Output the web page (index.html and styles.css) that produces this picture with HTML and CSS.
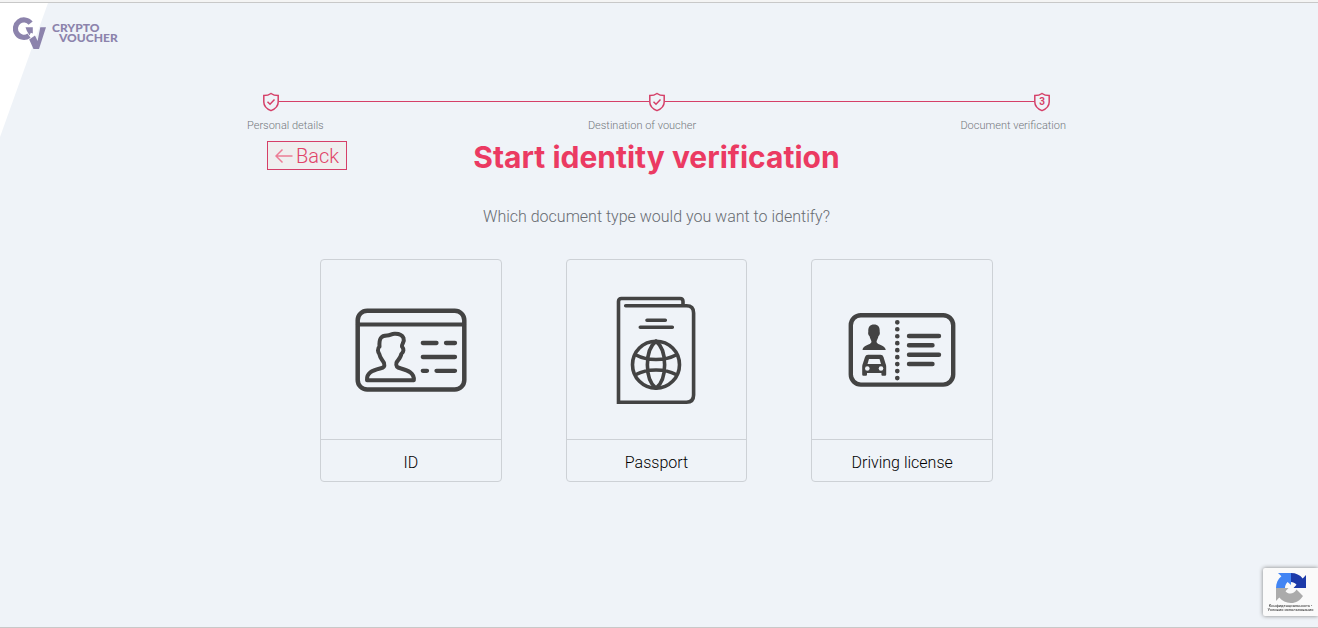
FILE: index.html
```html
<!DOCTYPE html>
<html lang="en">
<head>
<meta charset="utf-8">
<meta name="viewport" content="width=device-width, initial-scale=1">
<title>Start identity verification</title>
<link rel="stylesheet" href="styles.css">
</head>
<body>
<div class="page">
  <header class="header">
    <a class="logo" href="#" aria-label="Crypto Voucher">
      <svg class="logo-mark" width="34" height="33" viewBox="0 0 34 33" aria-hidden="true">
        <path d="M17.600 7.200A8.500 8.700 0 1 0 16 19.600" fill="none" stroke="#8c83ac" stroke-width="5.200"/>
        <path d="M12.500 11.300H19.800V17.500L17.800 16.700L16.500 19.500L13.800 14.800Z" fill="#8c83ac"/>
        <path d="M16.200 23.500L22 19.500L24.600 25L27.300 11.300H33L26 33H20.500Z" fill="#8c83ac"/>
      </svg>
      <span class="logo-text"><span>CRYPTO</span><span class="logo-second">VOUCHER</span></span>
    </a>
  </header>

  <main class="main">
    <section class="stepper" aria-label="Progress">
      <div class="track">
        <svg class="shield" width="18" height="20" viewBox="0 0 18 20" aria-hidden="true"><path d="M9 1.500C7 3 4.500 3.600 1.800 3.600V10C1.800 14 5 17 9 18.600C13 17 16.200 14 16.200 10V3.600C13.500 3.600 11 3 9 1.500Z"/><path d="M5.500 9.800L8 12.200L12.500 7.500"/></svg>
        <span class="line"></span>
        <svg class="shield" width="18" height="20" viewBox="0 0 18 20" aria-hidden="true"><path d="M9 1.500C7 3 4.500 3.600 1.800 3.600V10C1.800 14 5 17 9 18.600C13 17 16.200 14 16.200 10V3.600C13.500 3.600 11 3 9 1.500Z"/><path d="M5.500 9.800L8 12.200L12.500 7.500"/></svg>
        <span class="line"></span>
        <svg class="shield" width="18" height="20" viewBox="0 0 18 20" aria-hidden="true"><path d="M9 1.500C7 3 4.500 3.600 1.800 3.600V10C1.800 14 5 17 9 18.600C13 17 16.200 14 16.200 10V3.600C13.500 3.600 11 3 9 1.500Z"/><text class="shield-number" x="9" y="13" text-anchor="middle">3</text></svg>
      </div>
      <ol class="steps">
        <li>Personal details</li>
        <li>Destination of voucher</li>
        <li>Document verification</li>
      </ol>
    </section>

    <div class="title-row">
      <button class="back" type="button">
        <svg width="18" height="16" viewBox="0 0 18 16" aria-hidden="true"><path d="M17.500 8H1M7.500 1.500L1 8L7.500 14.500" fill="none" stroke="#ec7d95" stroke-width="1.500"/></svg>
        Back
      </button>
      <h1 class="title">Start identity verification</h1>
    </div>

    <p class="question">Which document type would you want to identify?</p>

    <div class="cards">
      <button class="card" type="button">
        <span class="picture">
          <svg width="112" height="84" viewBox="0 0 112 84" fill="none" stroke="#434343" stroke-width="4.500" stroke-linecap="round" stroke-linejoin="round" aria-hidden="true">
            <rect x="2.700" y="2.700" width="106.600" height="78.800" rx="9.500"/>
            <path d="M3 16.500H109" stroke-width="4"/>
            <path stroke-width="4" d="M12 72.200H58.800C59.500 65 53 62.500 46 60.500C42 59.500 40.500 58.500 41.500 54.500C43.500 51.500 46 49 46.300 46C49 44 49 41 47 38.500C46.500 36 50 34 48.500 30C47 26.500 43.500 25.500 39.500 25.700C36 25.800 35.500 27.500 32 27.500C26 27.500 24 30.500 24.500 38.500C22 40.500 23 44.500 24.300 46C25 50 27.500 52 29 55C30 58.500 29 59.500 25 60.500C17 62.500 11.500 65 12 72.200Z"/>
            <path stroke-width="4.300" d="M67.800 35H81.500M91 35H100M67.800 49H100M67.800 62.800H72M81.500 62.800H100"/>
          </svg>
        </span>
        <span class="name">ID</span>
      </button>
      <button class="card" type="button">
        <span class="picture">
          <svg width="80" height="108" viewBox="0 0 80 108" fill="none" stroke="#434343" stroke-width="3.600" stroke-linecap="round" stroke-linejoin="round" aria-hidden="true">
            <path stroke-linejoin="miter" d="M9.700 9.800H70.500Q77.600 9.800 77.600 17V99Q77.600 106.200 70.500 106.200H2.500V5.500Q2.500 2.500 5.500 2.500H64Q67 2.500 67 5.500V9.500"/>
            <path d="M31 24.200H49.300M24.300 31.300H56.300"/>
            <circle cx="40" cy="68.700" r="23.500"/>
            <path d="M40 45.200C28.500 54 28.500 83.400 40 92.200C51.500 83.400 51.500 54 40 45.200M20 59C31 65 49 65 60 59M20 78.500C31 72.500 49 72.500 60 78.500"/>
          </svg>
        </span>
        <span class="name">Passport</span>
      </button>
      <button class="card" type="button">
        <span class="picture">
          <svg width="108" height="76" viewBox="0 0 108 76" fill="none" stroke="#434343" stroke-width="4.400" stroke-linecap="round" aria-hidden="true">
            <rect x="2.800" y="3.200" width="102.400" height="69.400" rx="10"/>
            <path d="M49.300 10.300V66.500" stroke-width="4.700" stroke-dasharray="0 6.970"/>
            <path d="M61 24H91M61 33.300H84.500M61 42.700H91M61 52H84.500"/>
            <path fill="#434343" stroke="none" d="M26 12.500C22 12.500 20 15 20.300 19.500C19.700 22 20.700 23.500 21.500 24C22 26.500 23.300 28 23.500 30C22.500 33.500 15 32.500 14.500 38H37.800C37 32.500 29.500 33.500 28.500 30C28.700 28 30 26.500 30.500 24C31.300 23.500 32.300 22 31.700 19.500C32 15 30 12.500 26 12.500Z"/>
            <path fill="#434343" stroke="none" d="M20 42.800H32.500Q34.800 42.800 35.500 45L37.500 51.500Q38.200 53 38.200 54.500V62.500Q38.200 63.800 37 63.800H34.500Q33.400 63.800 33.400 62.500V61H19V62.500Q19 63.800 17.900 63.800H15.400Q14.200 63.800 14.200 62.500V54.500Q14.200 53 14.900 51.500L17 45Q17.700 42.800 20 42.800Z"/>
            <g fill="#eff3f8" stroke="none">
              <path d="M21 47H31.500L33 52H19.500Z"/>
              <circle cx="19.300" cy="56.500" r="2.300"/>
              <circle cx="33" cy="56.500" r="2.300"/>
            </g>
          </svg>
        </span>
        <span class="name">Driving license</span>
      </button>
    </div>
  </main>

  <aside class="captcha" aria-label="reCAPTCHA">
    <svg width="32" height="32" viewBox="0 0 32 32" aria-hidden="true">
      <path fill="#1c3aa9" d="M16 1C21 1 25 3 27.700 6.400L31 3V16H18.500L21.500 12.800C20 11 18 10 16 10Z"/>
      <path fill="#4285f4" d="M16 1V13L12.600 10C11 11.500 10 13.500 10 16H1C1 11 3 7 6.400 4.300L3 1Z"/>
      <path fill="#ababab" d="M1 16H13.500L10.500 19.200C13 22.500 19 22.500 21.500 17.500L28 24C25 28.500 21 31 16 31C11 31 7 29 4.300 25.600L1 29Z"/>
    </svg>
    <span class="captcha-links"><a href="#">Конфиденциальность</a> -<br><a href="#">Условия использования</a></span>
  </aside>
</div>
</body>
</html>
```

FILE: styles.css
```css
* {
  box-sizing: border-box;
}

body {
  margin: 0;
  font-family: Roboto, "Liberation Sans", sans-serif;
  font-weight: 300;
  background: #f4f4f4;
}

button {
  font: inherit;
  cursor: pointer;
}

.page {
  min-height: calc(100vh - 2px);
  margin-top: 2px;
  border-top: 1px solid #c8c8c8;
  border-bottom: 1px solid #c8c8c8;
  background: #eff3f8;
  position: relative;
}

.page::before {
  content: "";
  position: absolute;
  top: 0;
  left: 0;
  width: 48px;
  height: 134px;
  background: #fff;
  clip-path: polygon(0 0, 100% 0, 0 100%);
}

.header {
  position: relative;
  display: flex;
  padding: 13px 13px 0;
}

.logo {
  display: flex;
  gap: 5px;
  color: #8c83ac;
  text-decoration: none;
}

.logo-text {
  display: flex;
  flex-direction: column;
  padding-top: 7px;
  font: 900 12px/10px Lato, sans-serif;
}

.logo-second {
  padding-left: 7px;
}

.main {
  display: flex;
  flex-direction: column;
  align-items: center;
  padding: 43px 5px 32px 0;
}

.stepper {
  width: 100%;
  max-width: 819px;
}

.track {
  display: flex;
  align-items: flex-start;
  padding: 0 15px;
}

.line {
  flex: 1;
  height: 1px;
  margin: 9px -1px 0;
  background: #d53f68;
}

.shield {
  fill: none;
  stroke: #d53f68;
  stroke-width: 1.5;
}

.shield-number {
  font: 700 10px Roboto, sans-serif;
  fill: #d53f68;
  stroke: none;
}

.steps {
  display: flex;
  justify-content: space-between;
  margin: 0;
  padding: 7px 0 0;
  list-style: none;
  font-size: 11px;
  line-height: 14px;
  color: #74787e;
}

.title-row {
  display: grid;
  grid-template-columns: 1fr auto 1fr;
  align-items: start;
  width: 100%;
  max-width: 779px;
  padding-top: 8px;
}

.back {
  justify-self: start;
  display: flex;
  align-items: center;
  gap: 3px;
  height: 29px;
  padding: 0 7px;
  border: 1px solid #d53f68;
  background: #efefef;
  color: #e04468;
  font-size: 20px;
}

.title {
  margin: 0;
  font: 700 30px/32px Inter, sans-serif;
  color: #eb3a62;
}

.question {
  margin: 32px 0 0;
  font-size: 16px;
  line-height: 24px;
  color: #686c72;
}

.cards {
  display: grid;
  grid-template-columns: repeat(3, 1fr);
  gap: 64px;
  width: 100%;
  max-width: 673px;
  margin-top: 30px;
}

.card {
  display: flex;
  flex-direction: column;
  padding: 0;
  border: 1px solid #cdd1d6;
  border-radius: 4px;
  background: none;
  color: #000;
}

.picture {
  display: flex;
  align-items: center;
  justify-content: center;
  align-self: stretch;
  height: 180px;
  border-bottom: 1px solid #cdd1d6;
}

.name {
  align-self: stretch;
  padding: 11px 0 6px;
  font-size: 16px;
  line-height: 24px;
}

.captcha {
  position: fixed;
  right: 0;
  bottom: 12px;
  display: flex;
  flex-direction: column;
  align-items: center;
  width: 55px;
  height: 48px;
  padding-top: 4px;
  border-radius: 2px 0 0 2px;
  background: #fafafa;
  box-shadow: 0 0 4px #808080;
}

.captcha-links {
  font: 400 4px/4px Roboto, sans-serif;
  color: #222;
  text-align: center;
  white-space: nowrap;
}

.captcha-links a {
  color: inherit;
  text-decoration: none;
}
```
